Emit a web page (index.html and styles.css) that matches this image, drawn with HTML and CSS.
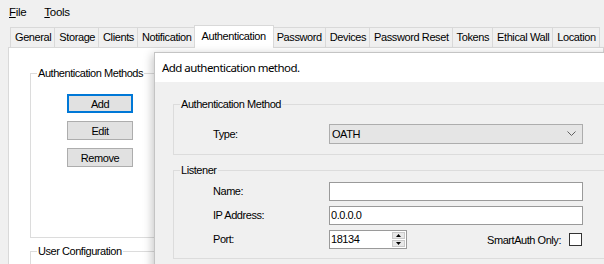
FILE: index.html
```html
<!DOCTYPE html>
<html>
<head>
<meta charset="utf-8">
<link rel="stylesheet" href="styles.css">
</head>
<body>
<div class="window">
  <div class="menubar">
    <span class="menu-item"><u>F</u>ile</span>
    <span class="menu-item"><u>T</u>ools</span>
  </div>
  <div class="tabstrip">
    <div class="tab">General</div>
    <div class="tab">Storage</div>
    <div class="tab">Clients</div>
    <div class="tab">Notification</div>
    <div class="tab active">Authentication</div>
    <div class="tab">Password</div>
    <div class="tab">Devices</div>
    <div class="tab">Password Reset</div>
    <div class="tab">Tokens</div>
    <div class="tab">Ethical Wall</div>
    <div class="tab">Location</div>
  </div>
  <div class="tabpage">
    <fieldset class="group methods">
      <legend>Authentication Methods</legend>
      <div class="btn-col">
        <button class="btn focused">Add</button>
        <button class="btn">Edit</button>
        <button class="btn">Remove</button>
      </div>
    </fieldset>
    <fieldset class="group userconf">
      <legend>User Configuration</legend>
    </fieldset>
  </div>

  <div class="dialog">
    <div class="dlg-title">Add authentication method.</div>
    <div class="dlg-body">
      <fieldset class="group dgroup authgroup">
        <legend>Authentication Method</legend>
        <div class="form">
          <span class="lbl">Type:</span>
          <div class="combo">
            <span>OATH</span>
            <svg class="chev" width="9" height="6" viewBox="0 0 9 6"><polyline points="0.5,0.5 4.5,4.5 8.5,0.5" fill="none" stroke="#606060" stroke-width="1"/></svg>
          </div>
        </div>
      </fieldset>
      <fieldset class="group dgroup listener">
        <legend>Listener</legend>
        <div class="form">
          <span class="lbl">Name:</span>
          <div class="textbox"></div>
          <span class="lbl">IP Address:</span>
          <div class="textbox">0.0.0.0</div>
          <span class="lbl">Port:</span>
          <div class="port-row">
            <div class="numeric">
              <span>18134</span>
              <span class="spin">
                <span class="spin-btn"><svg width="5" height="3" viewBox="0 0 5 3"><polygon points="2.5,0 5,3 0,3" fill="#000"/></svg></span>
                <span class="spin-btn"><svg width="5" height="3" viewBox="0 0 5 3"><polygon points="0,0 5,0 2.5,3" fill="#000"/></svg></span>
              </span>
            </div>
            <span class="smart">SmartAuth Only:</span>
            <span class="checkbox"></span>
          </div>
        </div>
      </fieldset>
    </div>
  </div>
</div>
</body>
</html>
```

FILE: styles.css
```css
* { box-sizing: border-box; }
html, body { margin: 0; padding: 0; }
body {
  width: 604px;
  height: 264px;
  overflow: hidden;
  background: #f0f0f0;
  font-family: "Liberation Sans", Arial, sans-serif;
  font-size: 11px;
  letter-spacing: -0.45px;
  color: #000;
}
.window { position: relative; height: 264px; overflow: hidden; }

/* menu */
.menubar {
  height: 25px;
  display: flex;
  align-items: center;
  padding-left: 9px;
  padding-bottom: 2px;
  font-size: 11.5px;
  letter-spacing: -0.3px;
}
.menu-item { margin-right: 18px; }

/* tabs */
.tabstrip {
  height: 22px;
  display: flex;
  align-items: flex-end;
  padding-left: 10px;
  white-space: nowrap;
  letter-spacing: -0.4px;
}
.tab {
  height: 20px;
  line-height: 18px;
  padding: 0 3px 0 4px;
  border: 1px solid #d9d9d9;
  border-bottom: none;
  margin-left: -1px;
  background: #f0f0f0;
  flex: none;
}
.tab:first-child { margin-left: 0; }
.tab.active {
  height: 23px;
  line-height: 20px;
  margin: 0 -1px -1px -2px;
  padding: 0 7px 0 7px;
  background: #fff;
  position: relative;
  z-index: 2;
}

/* tab page */
.tabpage {
  margin-left: 8px;
  height: 300px;
  background: #fff;
  border: 1px solid #d9d9d9;
  padding-left: 21px;
  position: relative;
  z-index: 1;
}
.group {
  margin: 0;
  padding: 0;
  border: 1px solid #dcdcdc;
  min-width: 0;
}
.group legend {
  margin-left: 6px;
  padding: 0 1px;
  line-height: 13px;
  height: 13px;
}
.methods {
  margin-top: 19px;
  width: 170px;
  padding: 14px 0 70px 0;
}
.btn-col {
  display: flex;
  flex-direction: column;
  gap: 8px;
  padding-left: 36px;
}
.btn {
  width: 66px;
  height: 19px;
  padding: 0;
  margin: 0;
  font: inherit;
  letter-spacing: inherit;
  color: #000;
  background: #e1e1e1;
  border: 1px solid #adadad;
}
.btn.focused { border: 2px solid #0078d7; }
.userconf { margin-top: 7px; width: 170px; height: 40px; }

/* dialog */
.dialog {
  position: absolute;
  left: 154px;
  top: 52px;
  width: 480px;
  height: 240px;
  border: 1px solid #c4c4c4;
  background: #f0f0f0;
  box-shadow: -2px 2px 9px rgba(0,0,0,0.22);
  z-index: 5;
}
.dlg-title {
  height: 29px;
  line-height: 29px;
  background: #fff;
  padding-left: 7px;
  font-family: "Noto Sans", "Open Sans", sans-serif;
  font-size: 11.5px;
  letter-spacing: -0.55px;
}
.dlg-body { padding: 16px 0 0 18px; }
.dgroup { width: 470px; }
.authgroup { padding: 13px 0 10px 0; }
.listener { margin-top: 9px; padding: 5px 0 9px 0; }
.form {
  display: grid;
  grid-template-columns: 116px 254px;
  row-gap: 5px;
  padding-left: 39px;
  align-items: center;
}
.lbl { line-height: 13px; }
.combo {
  height: 20px;
  background: #e5e5e5;
  border: 1px solid #adadad;
  display: flex;
  align-items: center;
  justify-content: space-between;
  padding: 0 6px 0 2px;
}
.chev { display: block; }
.textbox {
  height: 19px;
  background: #fff;
  border: 1px solid #9a9a9a;
  line-height: 17px;
  padding-left: 1px;
}
.port-row {
  height: 19px;
  display: flex;
  align-items: center;
}
.numeric {
  width: 78px;
  height: 19px;
  background: #fff;
  border: 1px solid #9a9a9a;
  display: flex;
  justify-content: space-between;
  padding-left: 1px;
  line-height: 17px;
}
.spin {
  width: 14px;
  display: flex;
  flex-direction: column;
  padding: 1px 1px 1px 0;
  gap: 1px;
}
.spin-btn {
  flex: 1;
  background: #e8e8e8;
  border: 1px solid #c9c9c9;
  display: flex;
  align-items: center;
  justify-content: center;
}
.spin-btn svg { display: block; }
.smart { margin-left: auto; margin-right: 8px; }
.checkbox {
  width: 13px;
  height: 13px;
  border: 1px solid #333;
  background: #fff;
  margin-right: 1px;
}
```
